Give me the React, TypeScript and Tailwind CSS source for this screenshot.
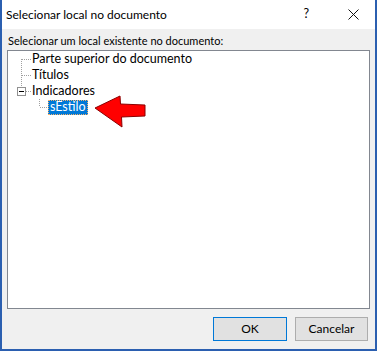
import React from "react";

const font = { fontFamily: 'Lato, "Noto Sans", sans-serif' };

function Connector({ kind }: { kind: "first" | "mid" | "expander" }) {
  return (
    <svg width="24" height="16" className="shrink-0" shapeRendering="crispEdges">
      {kind === "first" && <line x1="13.5" y1="8" x2="13.5" y2="16" stroke="#a0a0a0" strokeDasharray="1 1" />}
      {kind === "mid" && <line x1="13.5" y1="0" x2="13.5" y2="16" stroke="#a0a0a0" strokeDasharray="1 1" />}
      {kind !== "expander" && <line x1="14" y1="8.5" x2="24" y2="8.5" stroke="#a0a0a0" strokeDasharray="1 1" />}
      {kind === "expander" && (
        <>
          <line x1="13.5" y1="0" x2="13.5" y2="4" stroke="#a0a0a0" strokeDasharray="1 1" />
          <rect x="9.5" y="4.5" width="8" height="8" fill="white" stroke="#919191" />
          <line x1="11" y1="8.5" x2="16" y2="8.5" stroke="#000" />
          <line x1="18" y1="8.5" x2="24" y2="8.5" stroke="#a0a0a0" strokeDasharray="1 1" />
        </>
      )}
    </svg>
  );
}

export default function App() {
  return (
    <div
      className="relative w-[377px] h-[351px] flex flex-col border-l-2 border-r-2 border-b-2 border-[#2b5fb0] bg-[#f0f0f0] text-black"
      style={font}
    >
      {/* title bar */}
      <div className="h-[29px] bg-white flex items-center pl-[4px] shrink-0">
        <span className="text-[12px] leading-none">Selecionar local no documento</span>
        <span className="ml-auto text-[12.5px] leading-none mr-[39px]">?</span>
        <svg width="11" height="11" className="mr-[16px]" viewBox="0 0 11 11">
          <path d="M0.5 0.5 L10.5 10.5 M10.5 0.5 L0.5 10.5" stroke="#111" strokeWidth="1" />
        </svg>
      </div>

      <div className="flex-1 flex flex-col pl-[5px] pr-[5px]">
        <div className="text-[11px] h-[21px] flex items-center pt-[4px] pl-[1px]">
          Selecionar um local existente no documento:
        </div>
        <div className="h-[259px] bg-white border border-[#828790] text-[12.5px]">
          <div className="flex items-center h-[16px]">
            <Connector kind="first" />
            <span className="leading-none">Parte superior do documento</span>
          </div>
          <div className="flex items-center h-[16px]">
            <Connector kind="mid" />
            <span className="leading-none">Títulos</span>
          </div>
          <div className="flex items-center h-[16px]">
            <Connector kind="expander" />
            <span className="leading-none">Indicadores</span>
          </div>
          <div className="flex items-center h-[16px]">
            <svg width="40" height="16" className="shrink-0" shapeRendering="crispEdges">
              <line x1="31.5" y1="0" x2="31.5" y2="8" stroke="#a0a0a0" strokeDasharray="1 1" />
              <line x1="32" y1="8.5" x2="40" y2="8.5" stroke="#a0a0a0" strokeDasharray="1 1" />
            </svg>
            <span className="leading-none bg-[#0078d7] text-white px-[1px] h-[15px] flex items-center border border-dotted border-[#f5b26b]">
              sEstilo
            </span>
          </div>
        </div>
        <div className="flex justify-end gap-[8px] mt-[8px] pr-[2px]">
          <button className="w-[74px] h-[24px] bg-[#e1e1e1] border border-[#0078d7] text-[12px] leading-none">
            OK
          </button>
          <button className="w-[73px] h-[24px] bg-[#e1e1e1] border border-[#adadad] text-[12px] leading-none">
            Cancelar
          </button>
        </div>
      </div>

      {/* red arrow pointing at the selected bookmark */}
      <svg className="absolute left-[91px] top-[95px]" width="56" height="34" viewBox="0 0 56 34">
        <path
          d="M2 13 L27 1 L27.5 9 L52 10 L52 21 L28.5 22 L29 32 Z"
          fill="#ff0000"
          stroke="#8a0000"
          strokeWidth="1"
          strokeLinejoin="round"
        />
      </svg>
    </div>
  );
}
